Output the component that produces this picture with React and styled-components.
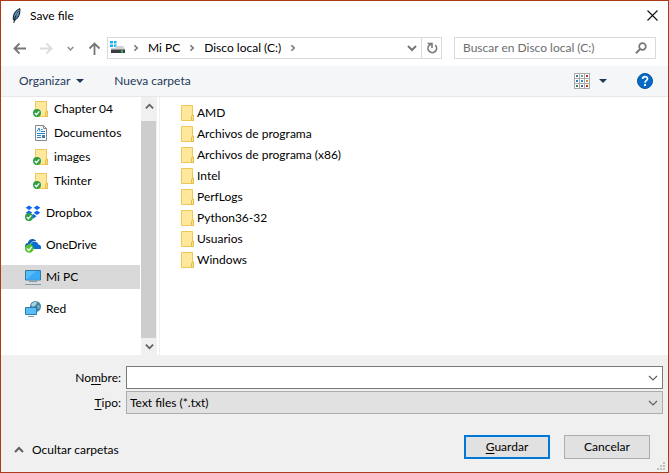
import React from 'react';
import styled, { createGlobalStyle, css } from 'styled-components';

const GlobalStyle = createGlobalStyle`
  * { box-sizing: border-box; }
  body { margin: 0; }
  body, button, input, select {
    font-family: Lato, "Open Sans", sans-serif;
    font-size: 12px;
    line-height: 16px;
    color: #000;
  }
  button { margin: 0; padding: 0; border: 0; background: none; }
  svg { display: block; flex: none; }
`;

const Dialog = styled.main`
  display: flex;
  flex-direction: column;
  min-height: 100vh;
  border: 1px solid #ac3a17;
  background: #fff;
`;

const TitleBar = styled.header`
  display: flex;
  align-items: center;
  height: 29px;
  padding: 0 10px;
`;

const Title = styled.h1`
  flex: 1;
  margin: 0 0 0 8px;
  font-size: 12px;
  font-weight: 400;
`;

const NavBar = styled.nav`
  display: flex;
  align-items: center;
  height: 36px;
  padding: 0 12px;
`;

const NavButtons = styled.div`
  display: flex;
  align-items: center;
  justify-content: space-between;
  width: 88px;
  margin-right: 6px;
`;

const IconButton = styled.button`
  display: flex;
  align-items: center;
  justify-content: center;
`;

const AddressBar = styled.div`
  display: flex;
  flex: 1;
  align-items: center;
  height: 22px;
  margin-right: 12px;
  padding-left: 2px;
  border: 1px solid #d9d9d9;
`;

const Crumbs = styled.div`
  display: flex;
  flex: 1;
  align-items: center;
  gap: 8px;
  margin-left: 6px;
`;

const Crumb = styled.button`
  white-space: nowrap;
`;

const RefreshButton = styled(IconButton)`
  width: 20px;
  height: 20px;
  margin-left: 4px;
  border-left: 1px solid #d9d9d9;
`;

const SearchBox = styled.label`
  display: flex;
  align-items: center;
  width: 202px;
  height: 22px;
  padding: 0 8px;
  border: 1px solid #d9d9d9;
`;

const SearchInput = styled.input`
  flex: 1;
  min-width: 0;
  padding: 0;
  border: 0;
  outline: 0;
  background: transparent;
  &::placeholder { color: #6d6d6d; opacity: 1; }
`;

const Toolbar = styled.div`
  display: flex;
  align-items: center;
  height: 31px;
  padding: 0 15px 0 18px;
  border-bottom: 1px solid #e8e8e9;
  background: #f5f6f7;
`;

const ToolButton = styled.button`
  display: flex;
  align-items: center;
  gap: 6px;
  margin-right: 30px;
  color: #1e395b;
`;

const ViewButton = styled(IconButton)`
  gap: 9px;
  margin: 0 30px 0 auto;
`;

const Browser = styled.div`
  display: flex;
  flex: 1;
`;

const Sidebar = styled.aside`
  display: flex;
  width: 159px;
  border-right: 1px solid #f0f0f0;
`;

const Tree = styled.ul`
  flex: 1;
  margin: 0 1px 0 0;
  padding: 0;
  list-style: none;
`;

const TreeItem = styled.li`
  display: flex;
  align-items: center;
  gap: 5px;
  height: 24px;
  padding-left: ${({ $nested }) => ($nested ? 32 : 24)}px;
  white-space: nowrap;
  ${({ $nested }) => !$nested && css`margin-top: 8px;`}
  ${({ $selected }) => $selected && css`background: #d9d9d9;`}
`;

const ScrollBar = styled.div`
  display: flex;
  flex-direction: column;
  width: 16px;
  margin-right: 2px;
  background: #f0f0f0;
`;

const ScrollButton = styled(IconButton)`
  height: ${({ $tall }) => ($tall ? 24 : 17)}px;
  padding-bottom: ${({ $tall }) => ($tall ? 6 : 0)}px;
`;

const ScrollThumb = styled.div`
  flex: 1;
  margin-right: 1px;
  background: #cdcdcd;
`;

const FileList = styled.ul`
  flex: 1;
  margin: 0;
  padding: 5px 0 0 21px;
  list-style: none;
`;

const FileItem = styled.li`
  display: flex;
  align-items: center;
  gap: 3px;
  height: 21px;
`;

const Footer = styled.footer`
  padding: 11px 5px 0 0;
  background: #f0f0f0;
`;

const Field = styled.div`
  display: grid;
  grid-template-columns: 120px 1fr;
  gap: 5px;
  align-items: center;
  margin-bottom: 2px;
`;

const FieldLabel = styled.label`
  text-align: right;
`;

const Key = styled.span`
  text-decoration: underline;
  text-underline-offset: 2px;
`;

const Combo = styled.div`
  display: grid;
  grid-template-columns: 1fr 18px;
  align-items: center;
  height: 23px;
  border: 1px solid ${({ $muted }) => ($muted ? '#adadad' : '#7a7a7a')};
  background: ${({ $muted }) => ($muted ? '#e1e1e1' : '#fff')};
`;

const NameInput = styled.input`
  height: 21px;
  min-width: 0;
  padding: 0 3px;
  border: 0;
  outline: 0;
  background: transparent;
`;

const TypeSelect = styled.select`
  grid-area: 1 / 1 / 2 / 3;
  height: 21px;
  min-width: 0;
  padding: 0 18px 0 3px;
  border: 0;
  outline: 0;
  appearance: none;
  background: transparent;
`;

const SelectArrow = styled.span`
  grid-area: 1 / 2 / 2 / 3;
  justify-self: center;
  pointer-events: none;
`;

const Actions = styled.div`
  display: flex;
  align-items: center;
  height: 62px;
  padding: 0 13px;
`;

const HideButton = styled.button`
  display: flex;
  align-items: center;
  gap: 8px;
  margin: 6px auto 0 0;
`;

const ActionButton = styled.button`
  width: 86px;
  height: 24px;
  margin-left: 14px;
  border: ${({ $primary }) => ($primary ? '2px solid #0078d7' : '1px solid #adadad')};
  background: #e1e1e1;
`;

const GripRow = styled.div`
  display: flex;
  justify-content: flex-end;
  height: 8px;
  margin: -16px -2px 2px 0;
`;

const Chevron = ({ dir = 'down', size = 8, color = '#606060', weight = 2 }) => {
  const d = {
    down: 'M1 3 5 7 9 3',
    up: 'M1 7 5 3 9 7',
    right: 'M3 1.5 6.5 5 3 8.5',
  }[dir];
  return (
    <svg width={size} height={size} viewBox="0 0 10 10" fill="none" stroke={color} strokeWidth={weight}>
      <path d={d} />
    </svg>
  );
};

const Caret = () => (
  <svg width="8" height="4" viewBox="0 0 8 4"><path d="M0 0h8L4 4z" fill="#1e395b" /></svg>
);

const Arrow = ({ dir, color }) => (
  <svg width="13" height="13" viewBox="0 0 13 13" fill="none" stroke={color} strokeWidth="1.8">
    <g transform={`rotate(${{ left: 0, up: 90, right: 180 }[dir]} 6.5 6.5)`}>
      <path d="M1.5 6.5H13M6.5 1.5l-5 5 5 5" />
    </g>
  </svg>
);

const FeatherIcon = () => (
  <svg width="11" height="16" viewBox="0 0 11 16">
    <path d="M9 .7C6 1.500 3.500 4 2.500 7.500l-.3 4 1.300 1.200C6.500 10.500 8 8.500 8.700 5z" fill="#4a80bf" stroke="#101820" />
    <path d="M8.300 1.800C6 3 4.800 5.500 4 9l2.500-2L8 3.300z" fill="#a3c8ee" />
    <path d="M7.500 3C5.500 6 4 9 2.800 15" fill="none" stroke="#111" strokeWidth=".9" />
  </svg>
);

const DriveIcon = () => (
  <svg width="16" height="16" viewBox="0 0 16 16">
    <path d="M0 1h3v2.500H0zM4 1h2.500v2.500H4zM0 4.500h3V7H0zM4 4.500h2.500V7H4z" fill="#12b5ee" />
    <path d="M5 6h8l2 3H1V8h4z" fill="#cfd1d3" />
    <path d="M1 9h14v4H1z" fill="#3b3e41" />
    <path d="M1 9.500h14" stroke="#8d8d8d" />
    <path d="M11 10.500h2v2h-2z" fill="#35d45b" />
  </svg>
);

const RefreshIcon = () => (
  <svg width="12" height="12" viewBox="0 0 12 12" fill="none" stroke="#7b7b7b">
    <path d="M9.300 3.200A4.300 4.300 0 1 1 3 3.500L5.500 1.500" strokeWidth="1.700" />
    <path d="M1.500 1.500H6v4.500" strokeWidth="1.600" />
  </svg>
);

const SearchIcon = () => (
  <svg width="12" height="12" viewBox="0 0 12 12" fill="none" stroke="#777" strokeWidth="1.700">
    <circle cx="7.500" cy="4.500" r="3.300" />
    <path d="M5.200 6.900 1 11.200" strokeWidth="2" />
  </svg>
);

const ViewIcon = () => {
  const tints = ['#397a86', '#5b9b85', '#b62e2e', '#397ab0', '#258be0', '#c9913a', '#3d7a55', '#53649b', '#c02d23'];
  return (
    <svg width="16" height="16" viewBox="0 0 16 16">
      <path d="M0 0h16v16H0z" fill="#a9a9a9" />
      {tints.map((tint, i) => (
        <g key={tint} transform={`translate(${1 + (i % 3) * 5} ${1 + Math.floor(i / 3) * 5})`}>
          <path d="M0 0h4v4H0z" fill="#fff" />
          <path d="M1 1h2v2H1z" fill={tint} />
        </g>
      ))}
    </svg>
  );
};

const HelpIcon = () => (
  <svg width="16" height="16" viewBox="0 0 16 16" fill="none">
    <circle cx="8" cy="8" r="7.500" fill="#0569c7" stroke="#0a559d" />
    <path d="M5.600 6C5.600 2.800 10.500 3 10.500 5.800 10.500 7.800 8 7.600 8 9.800" stroke="#fff" strokeWidth="1.700" />
    <path d="M7 11h2v2H7z" fill="#fff" />
  </svg>
);

const CloseIcon = () => (
  <svg width="11" height="11" viewBox="0 0 11 11" stroke="#111" strokeWidth="1.100">
    <path d="m.5.5 10 10m0-10-10 10" />
  </svg>
);

const FolderShape = () => (
  <>
    <path d="M.5.500h11v11h1v4H.5z" fill="#ffe79b" stroke="#ecc957" />
    <path d="M10.500 15.500v-4l1-1.500h1v5.500z" fill="#ffe28a" stroke="#e3bd48" />
  </>
);

const FolderIcon = () => (
  <svg width="13" height="16" viewBox="0 0 13 16"><FolderShape /></svg>
);

const Tick = ({ color = '#2f9e44' }) => (
  <>
    <circle cx="4" cy="12" r="4" fill={color} />
    <path d="m1.800 12 1.600 1.700L6.300 10.300" fill="none" stroke="#fff" strokeWidth="1.300" />
  </>
);

const SyncedFolderIcon = () => (
  <svg width="16" height="16" viewBox="0 0 16 16">
    <g transform="translate(2 0)"><FolderShape /></g>
    <Tick />
  </svg>
);

const DocumentIcon = () => (
  <svg width="16" height="16" viewBox="0 0 16 16" fill="none">
    <path d="M2.500.5h8l3 3v12h-11z" fill="#fafbfc" stroke="#85898d" />
    <path d="M10.500.5v3h3" stroke="#85898d" />
    <path d="M4 6.500 6 3l1 3.500M8 4.500h1.500M8 6.500h4M4 8.500h8M4 10.500h4M4 12.500h4" stroke="#2787c9" />
    <path d="M9 10h3v3H9z" fill="#477f9f" />
  </svg>
);

const DropboxIcon = () => (
  <svg width="16" height="16" viewBox="0 0 16 16">
    <path d="m4 .5 3.300 2.200L4 4.900.7 2.700zM12 .5l3.300 2.200L12 4.900 8.700 2.700zM4 5.500l3.300 2.200L4 9.900.7 7.700zM12 5.500l3.300 2.200L12 9.900 8.700 7.700zM8.500 9l3 2.200-3 2.200-3-2.200z" fill="#0a66f0" />
    <Tick />
  </svg>
);

const OneDriveIcon = () => (
  <svg width="16" height="16" viewBox="0 0 16 16">
    <path d="M0 9.500C0 7 1.500 6 3 6 3.500 2 8 .5 11 3.500L8 8l-3 3H1z" fill="#0b5fb5" />
    <path d="M4.500 12C4 9 5.500 7.500 7 7.500 7.500 3.500 12.500 3.500 13.300 7.500 16 7.500 16.500 10.500 15.800 12z" fill="#0a6fd2" />
    <path d="M5 8C6.500 4.500 9 3.700 12 5" fill="none" stroke="#fff" strokeWidth=".7" />
    <circle cx="4.300" cy="11.500" r="4.300" fill="#4fc52c" />
    <path d="m2 11.500 1.800 1.900 3-3.600" fill="none" stroke="#fff" strokeWidth="1.300" />
  </svg>
);

const ComputerIcon = () => (
  <svg width="16" height="16" viewBox="0 0 16 16">
    <path d="M.5 1.500h15v9.500H.5z" fill="#56bffa" stroke="#317aa6" />
    <path d="M1 10.500 11 2h4v8.500z" fill="#3aaaf6" />
    <path d="M4 12.500h8M0 15.500h16" stroke="#8799a8" />
  </svg>
);

const NetworkIcon = () => (
  <svg width="16" height="16" viewBox="0 0 16 16">
    <circle cx="10.500" cy="5.500" r="5.500" fill="#4584a3" />
    <path d="M6 4C8 1 10 .5 12 1L11 4 8 6z" fill="#a7d3df" />
    <path d="m13 4 2 1-1 3-2-2z" fill="#7db3c8" />
    <path d="M.5 6.500h11v7H.5z" fill="#56bffa" stroke="#317aa6" />
    <path d="M3 15.500h6" stroke="#8799a8" />
  </svg>
);

const GripIcon = () => (
  <svg width="8" height="8" viewBox="0 0 8 8" fill="#bfbfbf">
    <path d="M6 0h2v2H6zM6 3h2v2H6zM3 3h2v2H3zM6 6h2v2H6zM3 6h2v2H3zM0 6h2v2H0z" />
  </svg>
);

const places = [
  { name: 'Chapter 04', Icon: SyncedFolderIcon, nested: true },
  { name: 'Documentos', Icon: DocumentIcon, nested: true },
  { name: 'images', Icon: SyncedFolderIcon, nested: true },
  { name: 'Tkinter', Icon: SyncedFolderIcon, nested: true },
  { name: 'Dropbox', Icon: DropboxIcon },
  { name: 'OneDrive', Icon: OneDriveIcon },
  { name: 'Mi PC', Icon: ComputerIcon, selected: true },
  { name: 'Red', Icon: NetworkIcon },
];

const folders = [
  'AMD',
  'Archivos de programa',
  'Archivos de programa (x86)',
  'Intel',
  'PerfLogs',
  'Python36-32',
  'Usuarios',
  'Windows',
];

export default function App() {
  return (
    <>
      <GlobalStyle />
      <Dialog>
        <TitleBar>
          <FeatherIcon />
          <Title>Save file</Title>
          <IconButton aria-label="Cerrar"><CloseIcon /></IconButton>
        </TitleBar>

        <NavBar>
          <NavButtons>
            <IconButton aria-label="Atrás"><Arrow dir="left" color="#777" /></IconButton>
            <IconButton aria-label="Adelante"><Arrow dir="right" color="#dcdcdc" /></IconButton>
            <IconButton aria-label="Recientes"><Chevron size={7} color="#888" /></IconButton>
            <IconButton aria-label="Subir"><Arrow dir="up" color="#777" /></IconButton>
          </NavButtons>
          <AddressBar>
            <DriveIcon />
            <Crumbs>
              <Chevron dir="right" color="#777" />
              <Crumb>Mi PC</Crumb>
              <Chevron dir="right" color="#777" />
              <Crumb>Disco local (C:)</Crumb>
              <Chevron dir="right" color="#777" />
            </Crumbs>
            <IconButton aria-label="Ubicaciones anteriores"><Chevron size={10} color="#777" /></IconButton>
            <RefreshButton aria-label="Actualizar"><RefreshIcon /></RefreshButton>
          </AddressBar>
          <SearchBox>
            <SearchInput aria-label="Buscar" placeholder="Buscar en Disco local (C:)" />
            <SearchIcon />
          </SearchBox>
        </NavBar>

        <Toolbar>
          <ToolButton>Organizar <Caret /></ToolButton>
          <ToolButton>Nueva carpeta</ToolButton>
          <ViewButton aria-label="Cambiar vista"><ViewIcon /><Caret /></ViewButton>
          <IconButton aria-label="Ayuda"><HelpIcon /></IconButton>
        </Toolbar>

        <Browser>
          <Sidebar>
            <Tree>
              {places.map(({ name, Icon, nested, selected }) => (
                <TreeItem key={name} $nested={nested} $selected={selected}>
                  <Icon />
                  {name}
                </TreeItem>
              ))}
            </Tree>
            <ScrollBar>
              <ScrollButton $tall aria-label="Desplazar arriba"><Chevron dir="up" size={9} /></ScrollButton>
              <ScrollThumb />
              <ScrollButton aria-label="Desplazar abajo"><Chevron size={9} /></ScrollButton>
            </ScrollBar>
          </Sidebar>
          <FileList>
            {folders.map((name) => (
              <FileItem key={name}>
                <FolderIcon />
                {name}
              </FileItem>
            ))}
          </FileList>
        </Browser>

        <Footer>
          <Field>
            <FieldLabel htmlFor="file-name">No<Key>m</Key>bre:</FieldLabel>
            <Combo>
              <NameInput id="file-name" />
              <IconButton aria-label="Nombres anteriores"><Chevron size={10} weight={1.2} /></IconButton>
            </Combo>
          </Field>
          <Field>
            <FieldLabel htmlFor="file-type"><Key>T</Key>ipo:</FieldLabel>
            <Combo $muted>
              <TypeSelect id="file-type">
                <option>Text files (*.txt)</option>
              </TypeSelect>
              <SelectArrow><Chevron size={10} weight={1.2} /></SelectArrow>
            </Combo>
          </Field>
          <Actions>
            <HideButton><Chevron dir="up" size={10} />Ocultar carpetas</HideButton>
            <ActionButton $primary><Key>G</Key>uardar</ActionButton>
            <ActionButton>Cancelar</ActionButton>
          </Actions>
          <GripRow><GripIcon /></GripRow>
        </Footer>
      </Dialog>
    </>
  );
}
